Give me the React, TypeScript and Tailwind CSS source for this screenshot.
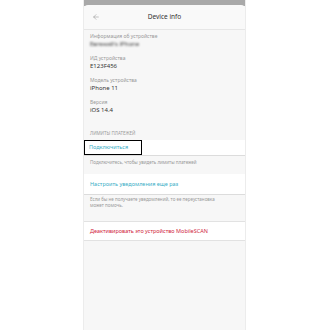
import { ArrowLeft } from "lucide-react";

const font = { fontFamily: '"Noto Sans", "Liberation Sans", sans-serif' };

function Field({ label, value, blur }: { label: string; value: string; blur?: boolean }) {
  return (
    <div className="px-[6px]">
      <div className="text-[5px] leading-[8px] text-[#9a9a9a]">{label}</div>
      <div className={`text-[6px] leading-[9px] text-[#333] ${blur ? "blur-[1px]" : ""}`}>{value}</div>
    </div>
  );
}

export default function App() {
  return (
    <div className="h-[330px] w-[330px] overflow-hidden bg-white" style={font}>
      <div className="ml-[83px] flex h-full w-[163px] flex-col border-x border-[#ececec] bg-[#f7f7f7]">
        <div className="h-[6px] shrink-0 bg-[#a9a9a9]" />
        <div className="-mt-[1px] flex h-[25px] shrink-0 items-center rounded-t-[4px] border-b border-[#e6e6e6] bg-[#f9f9f9] px-[8px]">
          <ArrowLeft className="h-[8px] w-[8px] text-[#888]" strokeWidth={1.5} />
          <div className="flex-1 pr-[8px] text-center text-[6.5px] text-[#333]">Device info</div>
        </div>

        <div className="flex flex-col gap-[5px] pt-[2px]">
          <Field label="Информация об устройстве" value="Евгений's iPhone" blur />
          <Field label="ИД устройства" value="E123F456" />
          <Field label="Модель устройства" value="iPhone 11" />
          <Field label="Версия" value="iOS 14.4" />
        </div>

        <div className="mt-[14px] px-[6px] text-[4.5px] leading-[8px] text-[#9a9a9a]">ЛИМИТЫ ПЛАТЕЖЕЙ</div>

        <div className="mt-[3px] flex h-[16px] items-center border-b border-[#dcdcdc] bg-white">
          <div className="flex h-full w-[58px] items-center border border-black px-[4px] text-[5.5px] text-[#3aaec6]">
            Подключиться
          </div>
        </div>
        <div className="px-[6px] py-[3px] text-[4.5px] leading-[7px] text-[#999]">
          Подключитесь, чтобы увидеть лимиты платежей
        </div>

        <div className="mt-[5px] flex h-[21px] items-center border-b border-[#dcdcdc] bg-white px-[6px] text-[5.5px] text-[#3aaec6]">
          Настроить уведомления еще раз
        </div>
        <div className="h-[26px] pl-[6px] pr-[16px] pt-[1px] text-[4.5px] leading-[6px] text-[#999]">
          Если бы не получаете уведомлений, то ее переустановка может помочь.
        </div>

        <div className="flex h-[20px] items-center border-y border-[#e2e2e2] bg-white px-[6px] text-[5.5px] text-[#d0243c]">
          Деактивировать это устройство MobileSCAN
        </div>
      </div>
    </div>
  );
}
